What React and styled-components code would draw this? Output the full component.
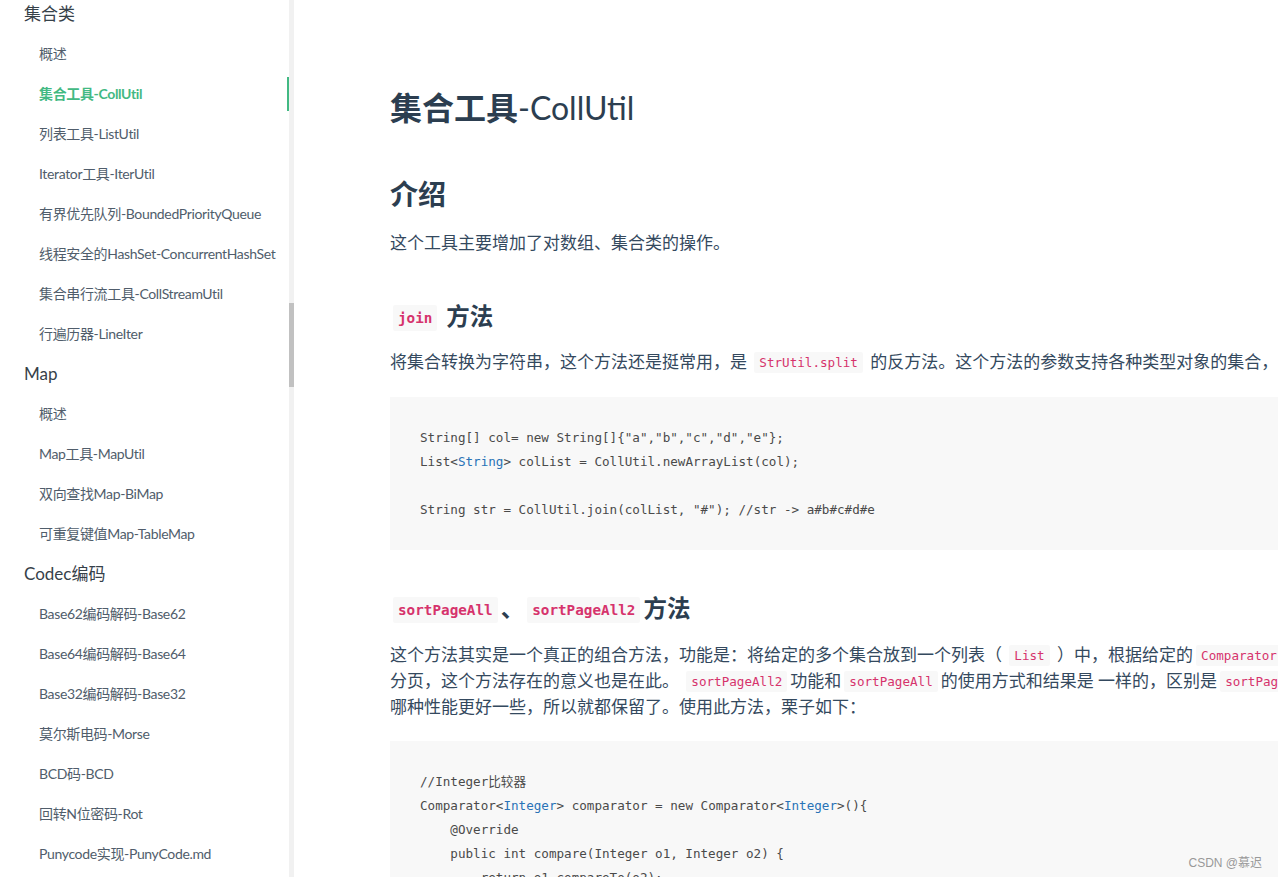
import styled, { createGlobalStyle } from "styled-components";

const GlobalStyle = createGlobalStyle`
  html, body {
    margin: 0;
    padding: 0;
    height: 877px;
    overflow: hidden;
    background: #fff;
  }
  body {
    font-family: "Lato", "Noto Sans CJK SC", sans-serif;
    color: #34495e;
    -webkit-font-smoothing: antialiased;
  }
`;

const Page = styled.div`
  display: flex;
  width: 100%;
  height: 877px;
  overflow: hidden;
`;

const Sidebar = styled.aside`
  display: flex;
  flex: 0 0 294px;
  height: 877px;
  overflow: hidden;
`;

const Nav = styled.ul`
  flex: 1;
  min-width: 0;
  overflow: hidden;
  list-style: none;
  margin: -3px 0 0;
  padding: 0;
`;

const NavRow = styled.li`
  height: 34px;
  line-height: 34px;
  margin: 0 0 6px;
  white-space: nowrap;
  padding-left: ${(p) => (p.$header ? "24px" : "39px")};
  font-size: ${(p) => (p.$header ? "17px" : "14px")};
  letter-spacing: ${(p) => (p.$header ? "0" : "-0.35px")};
  color: ${(p) => (p.$active ? "#42b983" : p.$header ? "#364149" : "#505d6b")};
  font-weight: ${(p) => (p.$active ? 700 : 400)};
  border-right: 2px solid ${(p) => (p.$active ? "#42b983" : "transparent")};
`;

const Track = styled.div`
  flex: 0 0 5px;
  background: #f1f1f1;
  display: flex;
  flex-direction: column;
`;

const Thumb = styled.div`
  margin-top: 303px;
  height: 84px;
  background: #c1c1c1;
`;

const Main = styled.main`
  flex: 0 0 auto;
  width: 1100px;
  padding: 88px 0 0 96px;
`;

const H1 = styled.h1`
  margin: 0;
  height: 40px;
  line-height: 40px;
  font-size: 32px;
  color: #2c3e50;
  font-weight: 700;
  white-space: nowrap;
`;

const Latin = styled.span`
  font-weight: 400;
`;

const H2 = styled.h2`
  margin: 46px 0 0;
  height: 40px;
  line-height: 40px;
  font-size: 28px;
  color: #2c3e50;
  font-weight: 700;
`;

const H3 = styled.h3`
  margin: ${(p) => p.$top || 43}px 0 0;
  height: 34px;
  line-height: 34px;
  font-size: 23.5px;
  color: #2c3e50;
  font-weight: 700;
  white-space: nowrap;
`;

const P = styled.p`
  margin: ${(p) => p.$top || 16}px 0 0;
  font-size: 17px;
  line-height: 26px;
  color: #34495e;
  white-space: nowrap;
`;

const Code = styled.code`
  font-family: "DejaVu Sans Mono", "Liberation Mono", "Noto Sans CJK SC", monospace;
  font-size: ${(p) => (p.$big ? "14.3px" : "12.6px")};
  line-height: 1;
  font-weight: ${(p) => (p.$big ? 700 : 400)};
  color: #d6336c;
  background: #f8f8f8;
  border-radius: 2px;
  padding: ${(p) => (p.$big ? "5px 5px" : "3px 5px")};
  margin: 0 3px;
  vertical-align: ${(p) => (p.$big ? "2px" : "1px")};
`;

const Pre = styled.pre`
  margin: ${(p) => p.$top || 22}px 0 0;
  background: #f8f8f8;
  padding: 29px 30px 28px;
  font-family: "DejaVu Sans Mono", "Liberation Mono", "Noto Sans CJK SC", monospace;
  font-size: 12.6px;
  line-height: 24px;
  color: #4a4a4a;
  white-space: pre;
`;

const Type = styled.span`
  color: #2973b7;
`;

const Watermark = styled.div`
  position: absolute;
  right: 16px;
  bottom: 7px;
  font-family: "Liberation Sans", "Noto Sans CJK SC", sans-serif;
  font-size: 12px;
  color: #999;
`;

const groups = [
  {
    title: "集合类",
    items: [
      "概述",
      "集合工具-CollUtil",
      "列表工具-ListUtil",
      "Iterator工具-IterUtil",
      "有界优先队列-BoundedPriorityQueue",
      "线程安全的HashSet-ConcurrentHashSet",
      "集合串行流工具-CollStreamUtil",
      "行遍历器-LineIter",
    ],
  },
  {
    title: "Map",
    items: ["概述", "Map工具-MapUtil", "双向查找Map-BiMap", "可重复键值Map-TableMap"],
  },
  {
    title: "Codec编码",
    items: [
      "Base62编码解码-Base62",
      "Base64编码解码-Base64",
      "Base32编码解码-Base32",
      "莫尔斯电码-Morse",
      "BCD码-BCD",
      "回转N位密码-Rot",
      "Punycode实现-PunyCode.md",
    ],
  },
];

const App = () => {
  return (
    <>
      <GlobalStyle />
      <Page>
        <Sidebar>
          <Nav>
            {groups.map((g) => [
              <NavRow key={g.title} $header>
                {g.title}
              </NavRow>,
              ...g.items.map((it) => (
                <NavRow key={g.title + it} $active={it === "集合工具-CollUtil"}>
                  {it}
                </NavRow>
              )),
            ])}
          </Nav>
          <Track>
            <Thumb />
          </Track>
        </Sidebar>
        <Main>
          <H1>
            集合工具<Latin>-CollUtil</Latin>
          </H1>
          <H2>介绍</H2>
          <P>这个工具主要增加了对数组、集合类的操作。</P>
          <H3>
            <Code $big>join</Code> 方法
          </H3>
          <P>
            将集合转换为字符串，这个方法还是挺常用，是 <Code>StrUtil.split</Code>{" "}
            的反方法。这个方法的参数支持各种类型对象的集合，最后连接每个对象时候调用其 <Code>toString()</Code> 方法，如下：
          </P>
          <Pre>
            {'String[] col= new String[]{"a","b","c","d","e"};\n'}
            List&lt;<Type>String</Type>&gt;{" colList = CollUtil.newArrayList(col);\n\n"}
            {'String str = CollUtil.join(colList, "#"); //str -> a#b#c#d#e'}
          </Pre>
          <H3 $top={41}>
            <Code $big>sortPageAll</Code>、<Code $big>sortPageAll2</Code>方法
          </H3>
          <P $top={17}>
            这个方法其实是一个真正的组合方法，功能是：将给定的多个集合放到一个列表（ <Code>List</Code> ）中，根据给定的
            <Code>Comparator</Code> 对象排序，然后分页取数据。这种方法非常类似于数据库多表查询后排序
            <br />
            分页，这个方法存在的意义也是在此。 <Code>sortPageAll2</Code>功能和<Code>sortPageAll</Code>
            的使用方式和结果是 一样的，区别是<Code>sortPageAll2</Code>使用了<Code>BoundedPriorityQueue</Code>作为中间容器，不清楚
            <br />
            哪种性能更好一些，所以就都保留了。使用此方法，栗子如下：
          </P>
          <Pre $top={21}>
            {"//Integer比较器\n"}
            Comparator&lt;<Type>Integer</Type>&gt; comparator = new Comparator&lt;<Type>Integer</Type>&gt;(){"{\n"}
            {"    @Override\n"}
            {"    public int compare(Integer o1, Integer o2) {\n"}
            {"        return o1.compareTo(o2);\n"}
            {"    }\n"}
            {"};"}
          </Pre>
        </Main>
        <Watermark>CSDN @慕迟</Watermark>
      </Page>
    </>
  );
};

export default App;
